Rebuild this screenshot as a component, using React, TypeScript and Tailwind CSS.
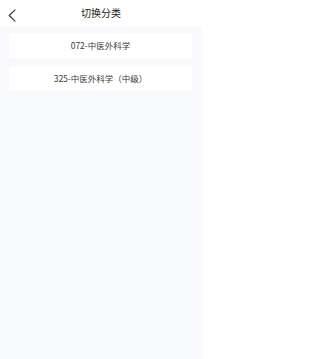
const categories = ['072-中医外科学', '325-中医外科学（中级）'];

function BackIcon() {
  return (
    <svg width="8" height="13" viewBox="0 0 8 13" fill="none">
      <polyline
        points="7,0.8 1.2,6.5 7,12.2"
        stroke="#333"
        strokeWidth="1.1"
        strokeLinecap="round"
        strokeLinejoin="round"
      />
    </svg>
  );
}

export default function App() {
  return (
    <div
      className="min-h-screen w-[202px] bg-[#f7f9fd] text-[#333]"
      style={{ fontFamily: '"Noto Sans CJK SC", "Noto Sans", sans-serif' }}
    >
      {/* Header */}
      <header className="relative flex h-[26px] items-center justify-center bg-white">
        <button className="absolute left-[7.5px] top-[8.5px] flex" aria-label="back">
          <BackIcon />
        </button>
        <h1 className="text-[10px] leading-none text-[#222]">切换分类</h1>
      </header>

      {/* List */}
      <div className="flex flex-col gap-[8px] pl-[9px] pr-[10px] pt-[7px]">
        {categories.map((c) => (
          <div
            key={c}
            className="flex h-[25px] items-center justify-center rounded-[2px] bg-white text-[8.5px] text-[#3a3a3a]"
          >
            {c}
          </div>
        ))}
      </div>
    </div>
  );
}
